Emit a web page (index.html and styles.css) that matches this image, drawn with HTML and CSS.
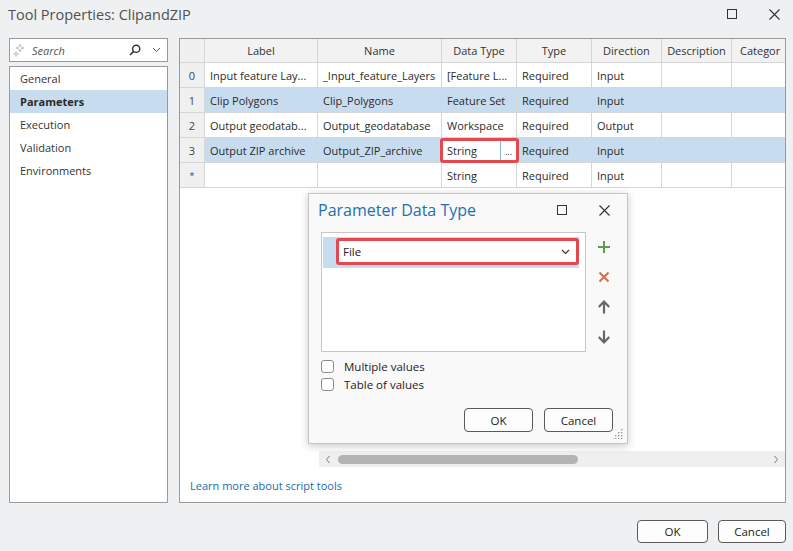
FILE: index.html
```html
<!DOCTYPE html>
<html>
<head>
<meta charset="utf-8">
<link rel="stylesheet" href="styles.css">
</head>
<body>
<div class="window">
  <div class="titlebar">
    <span class="title">Tool Properties: ClipandZIP</span>
    <div class="winctl">
      <svg class="ico-max" width="12" height="12" viewBox="0 0 12 12"><rect x="1.5" y="1.5" width="9" height="9" fill="none" stroke="#333" stroke-width="1"/></svg>
      <svg class="ico-close" width="13" height="13" viewBox="0 0 13 13"><path d="M1.5 1.5 L11.5 11.5 M11.5 1.5 L1.5 11.5" stroke="#333" stroke-width="1.1" fill="none"/></svg>
    </div>
  </div>

  <div class="main">
    <div class="side">
      <div class="search">
        <svg class="sparkle" width="12" height="14" viewBox="0 0 12 14"><path d="M7 1 Q7 5 11 5 Q7 5 7 9 Q7 5 3 5 Q7 5 7 1 Z" fill="none" stroke="#b5b5b5" stroke-width="0.8"/><path d="M3 8.5 Q3 11 5.5 11 Q3 11 3 13.5 Q3 11 0.5 11 Q3 11 3 8.5 Z" fill="none" stroke="#b5b5b5" stroke-width="0.8"/></svg>
        <span class="search-text">Search</span>
        <svg class="mag" width="12" height="12" viewBox="0 0 12 12"><circle cx="7.2" cy="4.8" r="3.6" fill="none" stroke="#333" stroke-width="1.4"/><path d="M4.6 7.4 L1 11" stroke="#333" stroke-width="1.5"/></svg>
        <svg class="chev" width="9" height="6" viewBox="0 0 9 6"><path d="M1 1 L4.5 4.5 L8 1" fill="none" stroke="#555" stroke-width="1"/></svg>
      </div>
      <div class="nav">
        <div class="nav-item">General</div>
        <div class="nav-item active">Parameters</div>
        <div class="nav-item">Execution</div>
        <div class="nav-item">Validation</div>
        <div class="nav-item">Environments</div>
      </div>
    </div>

    <div class="panel">
      <div class="grid-area">
        <div class="grid">
          <div class="c hd rh"></div>
          <div class="c hd">Label</div>
          <div class="c hd">Name</div>
          <div class="c hd">Data Type</div>
          <div class="c hd">Type</div>
          <div class="c hd">Direction</div>
          <div class="c hd">Description</div>
          <div class="c hd left">Categor</div>

          <div class="c rh">0</div>
          <div class="c">Input feature Lay...</div>
          <div class="c">_Input_feature_Layers</div>
          <div class="c">[Feature L...</div>
          <div class="c">Required</div>
          <div class="c">Input</div>
          <div class="c"></div>
          <div class="c"></div>

          <div class="c rh">1</div>
          <div class="c sel">Clip Polygons</div>
          <div class="c sel">Clip_Polygons</div>
          <div class="c sel">Feature Set</div>
          <div class="c sel">Required</div>
          <div class="c sel">Input</div>
          <div class="c sel"></div>
          <div class="c sel"></div>

          <div class="c rh">2</div>
          <div class="c">Output geodatab...</div>
          <div class="c">Output_geodatabase</div>
          <div class="c">Workspace</div>
          <div class="c">Required</div>
          <div class="c">Output</div>
          <div class="c"></div>
          <div class="c"></div>

          <div class="c rh">3</div>
          <div class="c sel">Output ZIP archive</div>
          <div class="c sel">Output_ZIP_archive</div>
          <div class="c sel edit">
            <div class="edit-box"><span class="edit-text">String</span><span class="edit-btn">...</span></div>
          </div>
          <div class="c sel">Required</div>
          <div class="c sel">Input</div>
          <div class="c sel"></div>
          <div class="c sel"></div>

          <div class="c rh star">*</div>
          <div class="c"></div>
          <div class="c"></div>
          <div class="c">String</div>
          <div class="c">Required</div>
          <div class="c">Input</div>
          <div class="c"></div>
          <div class="c"></div>
        </div>
      </div>

      <div class="hscroll">
        <svg class="arr" width="6" height="9" viewBox="0 0 6 9"><path d="M4.5 1 L1.5 4.5 L4.5 8" fill="none" stroke="#777" stroke-width="1"/></svg>
        <div class="thumb"></div>
        <div class="track-fill"></div>
        <svg class="arr" width="6" height="9" viewBox="0 0 6 9"><path d="M1.5 1 L4.5 4.5 L1.5 8" fill="none" stroke="#777" stroke-width="1"/></svg>
      </div>

      <div class="link-row"><a class="link">Learn more about script tools</a></div>

      <div class="popup">
        <div class="pop-head">
          <span class="pop-title">Parameter Data Type</span>
          <div class="pop-ctl">
            <svg width="12" height="12" viewBox="0 0 12 12"><rect x="1.5" y="1.5" width="9" height="9" fill="none" stroke="#333" stroke-width="1"/></svg>
            <svg width="13" height="13" viewBox="0 0 13 13"><path d="M1.5 1.5 L11.5 11.5 M11.5 1.5 L1.5 11.5" stroke="#333" stroke-width="1.1" fill="none"/></svg>
          </div>
        </div>
        <div class="pop-body">
          <div class="list-row">
            <div class="listbox">
              <div class="lrow">
                <div class="combo"><span>File</span>
                  <svg width="9" height="6" viewBox="0 0 9 6"><path d="M1 1 L4.5 4.5 L8 1" fill="none" stroke="#333" stroke-width="1.1"/></svg>
                </div>
              </div>
            </div>
            <div class="tools">
              <svg width="16" height="16" viewBox="0 0 16 16"><path d="M8 2 V14 M2 8 H14" stroke="#5aa04a" stroke-width="2"/></svg>
              <svg width="16" height="16" viewBox="0 0 16 16"><path d="M3.5 3.5 L12.5 12.5 M12.5 3.5 L3.5 12.5" stroke="#d3714c" stroke-width="2"/></svg>
              <svg width="16" height="16" viewBox="0 0 16 16"><path d="M8 14.5 V3 M2.8 8 L8 2.6 L13.2 8" fill="none" stroke="#666" stroke-width="2.2"/></svg>
              <svg width="16" height="16" viewBox="0 0 16 16"><path d="M8 1.5 V13 M2.8 8 L8 13.4 L13.2 8" fill="none" stroke="#666" stroke-width="2.2"/></svg>
            </div>
          </div>
          <div class="checks">
            <label class="chk"><span class="box"></span>Multiple values</label>
            <label class="chk"><span class="box"></span>Table of values</label>
          </div>
          <div class="pop-btns">
            <div class="btn pbtn">OK</div>
            <div class="btn pbtn">Cancel</div>
          </div>
        </div>
        <svg class="grip" width="10" height="10" viewBox="0 0 10 10" fill="#999"><rect x="8" y="0" width="1.4" height="1.4"/><rect x="5" y="3" width="1.4" height="1.4"/><rect x="8" y="3" width="1.4" height="1.4"/><rect x="2" y="6" width="1.4" height="1.4"/><rect x="5" y="6" width="1.4" height="1.4"/><rect x="8" y="6" width="1.4" height="1.4"/><rect x="-1" y="9" width="1.4" height="1.4"/><rect x="2" y="9" width="1.4" height="1.4"/><rect x="5" y="9" width="1.4" height="1.4"/><rect x="8" y="9" width="1.4" height="1.4"/></svg>
      </div>
    </div>
  </div>

  <div class="footer">
    <div class="btn fbtn ok">OK</div>
    <div class="btn fbtn cancel">Cancel</div>
  </div>
</div>
</body>
</html>
```

FILE: styles.css
```css
* { box-sizing: border-box; }
html, body { margin: 0; padding: 0; }
body {
  width: 793px;
  height: 551px;
  overflow: hidden;
  background: #eff0f1;
  font-family: "Open Sans", "Noto Sans", sans-serif;
  font-size: 11px;
  color: #2b2b2b;
}
.window { width: 793px; height: 551px; display: flex; flex-direction: column; }

.titlebar {
  height: 26px;
  display: flex;
  align-items: center;
  padding-left: 8px;
  margin-top: 1px;
}
.title { font-size: 14.5px; color: #505050; }
.winctl { margin-left: auto; display: flex; align-items: center; gap: 30px; padding-right: 12px; }

.main {
  margin-top: 11px;
  height: 465px;
  display: flex;
  gap: 11px;
  padding: 0 7px 0 9px;
}
.side { width: 159px; flex-shrink: 0; display: flex; flex-direction: column; gap: 4px; }
.search {
  height: 24px;
  background: #fff;
  border: 1px solid #9a9a9a;
  display: flex;
  align-items: center;
  padding-left: 3px;
}
.sparkle { margin-right: 7px; }
.search-text { font-style: italic; color: #555; font-size: 11px; }
.mag { margin-left: auto; margin-right: 11px; }
.chev { margin-right: 6px; }

.nav { flex: 1; background: #fff; border: 1px solid #9a9a9a; }
.nav-item { height: 23px; line-height: 23px; padding-left: 10px; color: #333; }
.nav-item.active { background: #c7dcef; font-weight: 700; color: #2a2a2a; }

.panel {
  flex: 1;
  min-width: 0;
  position: relative;
  background: #fff;
  border: 1px solid #9a9a9a;
  display: flex;
  flex-direction: column;
}
.grid-area { height: 412px; overflow: hidden; }
.grid {
  display: grid;
  grid-template-columns: 25px 113px 124px 75px 75px 70px 70px 80px;
  grid-template-rows: 24px repeat(5, 25px);
  width: 632px;
}
.c {
  border-right: 1px solid #d6d6d6;
  border-bottom: 1px solid #d6d6d6;
  display: flex;
  align-items: center;
  padding-left: 5px;
  white-space: nowrap;
  overflow: hidden;
  color: #2b2b2b;
}
.c.hd { background: #f2f2f2; justify-content: center; padding-left: 0; color: #333; }
.c.hd.left { justify-content: flex-start; padding-left: 8px; }
.c.rh { background: #f0f0f0; justify-content: center; padding-left: 0; color: #444; }
.c.rh.star { font-size: 9px; }
.c.sel { background: #c7dcef; }
.c.edit { padding: 0; overflow: visible; position: relative; z-index: 1; }
.edit-box {
  flex: 1;
  align-self: stretch;
  margin: 0 -3px -1px -2px;
  border: 3px solid #e4474e;
  border-radius: 3px;
  background: #fff;
  display: flex;
  align-items: center;
  padding-left: 4px;
}
.edit-text { flex: 1; }
.edit-btn {
  width: 16px;
  align-self: stretch;
  border-left: 1px solid #8fb3d4;
  display: flex;
  align-items: center;
  justify-content: center;
  font-size: 9px;
  line-height: 1;
  padding-top: 2px;
}

.hscroll {
  height: 16px;
  margin-left: 139px;
  background: #efefef;
  display: flex;
  align-items: center;
  padding: 0 6px;
}
.thumb { width: 240px; height: 9px; border-radius: 5px; background: #b4b4b4; margin-left: 7px; }
.track-fill { flex: 1; }

.link-row { flex: 1; padding: 11px 0 0 10px; }
.link { color: #1c6aa6; font-size: 11px; }

.popup {
  position: absolute;
  left: 128px;
  top: 154px;
  width: 320px;
  height: 251px;
  background: #f9f9f9;
  border: 1px solid #c6c6c6;
  box-shadow: 0 2px 8px rgba(0,0,0,0.22);
}
.pop-head { height: 32px; display: flex; align-items: center; padding-left: 9px; }
.pop-title { font-size: 16px; color: #2270b0; }
.pop-ctl { margin-left: auto; display: flex; align-items: center; gap: 30px; padding-right: 16px; }
.pop-body { padding: 6px 0 0 12px; }
.list-row { display: flex; }
.listbox {
  width: 265px;
  height: 120px;
  background: #fff;
  border: 1px solid #c6c6c6;
  padding: 4px 0 0 1px;
}
.lrow {
  width: 256px;
  height: 31px;
  background: #c7dcef;
  padding: 1px 0 0 13px;
}
.combo {
  height: 27px;
  border: 3px solid #e4474e;
  border-radius: 3px;
  background: #fff;
  display: flex;
  align-items: center;
  padding: 0 6px 0 4px;
  font-size: 11.5px;
  color: #222;
}
.combo span { flex: 1; }
.tools {
  width: 20px;
  margin-left: 8px;
  display: flex;
  flex-direction: column;
  align-items: center;
  gap: 14px;
  padding-top: 7px;
}
.checks { margin-top: 8px; display: flex; flex-direction: column; }
.chk { height: 18px; display: flex; align-items: flex-start; gap: 10px; font-size: 11.5px; color: #222; line-height: 13px; }
.box { width: 13px; height: 13px; border: 1px solid #8c8c8c; border-radius: 3px; background: #fff; }
.pop-btns { display: flex; justify-content: flex-end; gap: 11px; padding-right: 14px; margin-top: 12px; }
.btn {
  border: 1px solid #5a5a5a;
  border-radius: 4px;
  background: #fdfdfd;
  display: flex;
  align-items: center;
  justify-content: center;
  font-size: 11.5px;
  color: #222;
}
.pbtn { width: 69px; height: 24px; }
.grip { position: absolute; right: 4px; bottom: 4px; }

.footer { display: flex; justify-content: flex-end; gap: 10px; padding-right: 7px; margin-top: 17px; }
.fbtn { height: 23px; }
.ok { width: 71px; }
.cancel { width: 68px; }
```
